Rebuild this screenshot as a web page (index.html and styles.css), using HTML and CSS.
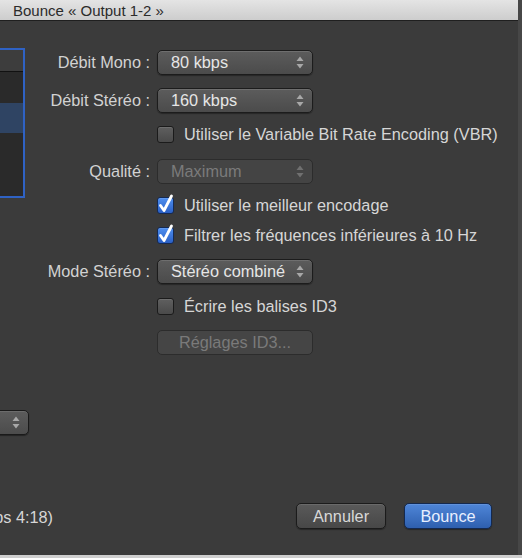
FILE: index.html
```html
<!DOCTYPE html>
<html lang="fr">
<head>
<meta charset="utf-8">
<title>Bounce</title>
<link rel="stylesheet" href="styles.css">
</head>
<body>
<div class="window">
  <div class="titlebar"><span class="title">Bounce « Output 1-2 »</span></div>
  <div class="main">
    <div class="side">
      <div class="list">
        <div class="list-head"></div>
        <div class="list-row"></div>
        <div class="list-row sel"></div>
        <div class="list-row fill"></div>
      </div>
      <div class="side-popup">
        <svg class="arrows" width="8" height="13" viewBox="0 0 8 13"><path d="M4 0.5 L7.5 5 L0.5 5 Z M0.5 8 L7.5 8 L4 12.5 Z"/></svg>
      </div>
    </div>
    <div class="form">
      <div class="row">
        <span class="lbl">Débit Mono :</span>
        <div class="popup"><span class="val">80 kbps</span><svg class="arrows" width="8" height="13" viewBox="0 0 8 13"><path d="M4 0.5 L7.5 5 L0.5 5 Z M0.5 8 L7.5 8 L4 12.5 Z"/></svg></div>
      </div>
      <div class="row">
        <span class="lbl">Débit Stéréo :</span>
        <div class="popup"><span class="val">160 kbps</span><svg class="arrows" width="8" height="13" viewBox="0 0 8 13"><path d="M4 0.5 L7.5 5 L0.5 5 Z M0.5 8 L7.5 8 L4 12.5 Z"/></svg></div>
      </div>
      <div class="row check-row before-popup">
        <span class="lbl"></span>
        <label class="check"><span class="box"></span><span class="ctext">Utiliser le Variable Bit Rate Encoding (VBR)</span></label>
      </div>
      <div class="row">
        <span class="lbl">Qualité :</span>
        <div class="popup disabled"><span class="val">Maximum</span><svg class="arrows" width="8" height="13" viewBox="0 0 8 13"><path d="M4 0.5 L7.5 5 L0.5 5 Z M0.5 8 L7.5 8 L4 12.5 Z"/></svg></div>
      </div>
      <div class="row check-row">
        <span class="lbl"></span>
        <label class="check"><span class="box on"><svg class="tick" width="17" height="17" viewBox="0 0 17 17"><path d="M3.5 8.5 L7 13.5 L14.5 -1"/></svg></span><span class="ctext">Utiliser le meilleur encodage</span></label>
      </div>
      <div class="row check-row before-popup">
        <span class="lbl"></span>
        <label class="check"><span class="box on"><svg class="tick" width="17" height="17" viewBox="0 0 17 17"><path d="M3.5 8.5 L7 13.5 L14.5 -1"/></svg></span><span class="ctext">Filtrer les fréquences inférieures à 10 Hz</span></label>
      </div>
      <div class="row">
        <span class="lbl">Mode Stéréo :</span>
        <div class="popup"><span class="val">Stéréo combiné</span><svg class="arrows" width="8" height="13" viewBox="0 0 8 13"><path d="M4 0.5 L7.5 5 L0.5 5 Z M0.5 8 L7.5 8 L4 12.5 Z"/></svg></div>
      </div>
      <div class="row check-row before-popup">
        <span class="lbl"></span>
        <label class="check"><span class="box"></span><span class="ctext">Écrire les balises ID3</span></label>
      </div>
      <div class="row">
        <span class="lbl"></span>
        <div class="pushbtn disabled">Réglages ID3...</div>
      </div>
    </div>
  </div>
  <div class="footer">
    <div class="status"><span>durée temps 4:18)</span></div>
    <div class="buttons">
      <button class="btn">Annuler</button>
      <button class="btn primary">Bounce</button>
    </div>
  </div>
</div>
</body>
</html>
```

FILE: styles.css
```css
html, body {
  margin: 0;
  padding: 0;
}
body {
  width: 522px;
  height: 558px;
  background: #cfcfcf;
  font-family: "Liberation Sans", Arial, sans-serif;
  overflow: hidden;
}
.window {
  width: 518px;
  height: 555px;
  background: #3b3b3b;
  border-right: 4px solid #474747;
  display: flex;
  flex-direction: column;
  overflow: hidden;
}
.titlebar {
  height: 20px;
  flex: none;
  background: linear-gradient(#e4e4e4, #cdcdcd);
  border-bottom: 1px solid #1f1f1f;
  display: flex;
  align-items: center;
  padding-left: 13px;
}
.title {
  font-size: 15px;
  color: #2b2b2b;
}
.main {
  height: 470px;
  flex: none;
  display: flex;
}
.side {
  width: 30px;
  flex: none;
  display: flex;
  flex-direction: column;
}
.list {
  margin-top: 27px;
  width: 23px;
  height: 146px;
  border: 2px solid #2f62c4;
  border-left: none;
  background: #2a2a2a;
  display: flex;
  flex-direction: column;
}
.list-head {
  height: 21px;
  background: #3d3d3d;
  border-bottom: 1px solid #111;
}
.list-row {
  height: 31px;
}
.list-row.sel {
  height: 30px;
  background: #2f4463;
}
.list-row.fill {
  flex: 1;
}
.side-popup {
  margin-top: 212px;
  height: 25px;
  margin-left: -6px;
  box-sizing: border-box;
  width: 35px;
  border: 1px solid #1a1a1a;
  border-radius: 5px;
  background: linear-gradient(#5c5c5c, #4c4c4c);
  box-shadow: inset 0 1px 0 rgba(255,255,255,0.1), 0 1px 1px rgba(0,0,0,0.4);
  display: flex;
  align-items: center;
  justify-content: flex-end;
  padding-right: 8px;
}
.arrows {
  fill: #a8a8a8;
  flex: none;
}
.form {
  padding-top: 29px;
  display: flex;
  flex-direction: column;
  gap: 12.5px;
}
.row {
  display: grid;
  grid-template-columns: 120px auto;
  column-gap: 7px;
  align-items: center;
}
.row.before-popup {
  margin-bottom: 4px;
}
.lbl {
  text-align: right;
  font-size: 16.3px;
  color: #d2d2d2;
  white-space: nowrap;
}
.popup {
  width: 156px;
  height: 25px;
  box-sizing: border-box;
  border: 1px solid #1c1c1c;
  border-radius: 5px;
  background: linear-gradient(#5c5c5c, #4b4b4b);
  box-shadow: inset 0 1px 0 rgba(255,255,255,0.12), 0 1px 1px rgba(0,0,0,0.35);
  display: flex;
  align-items: center;
  padding: 0 8px 0 13px;
}
.popup .val {
  flex: 1;
  font-size: 16.3px;
  color: #e6e6e6;
  white-space: nowrap;
}
.popup.disabled {
  background: #444;
  border-color: #2c2c2c;
  box-shadow: none;
}
.popup.disabled .val {
  color: #7b7b7b;
}
.popup.disabled .arrows {
  fill: #707070;
}
.check-row {
  height: 17px;
}
.check {
  display: flex;
  align-items: center;
  gap: 10px;
}
.box {
  width: 17px;
  height: 17px;
  box-sizing: border-box;
  border: 1px solid #1b1b1b;
  border-radius: 3px;
  background: linear-gradient(#5f5f5f, #4a4a4a);
  box-shadow: inset 0 1px 0 rgba(255,255,255,0.1);
  flex: none;
  position: relative;
}
.box.on {
  background: linear-gradient(#4f8ff0, #2a5fc4);
  border-color: #142a55;
}
.tick {
  position: absolute;
  left: -1px;
  top: -1px;
  overflow: visible;
}
.tick path {
  fill: none;
  stroke: #fff;
  stroke-width: 2.8;
  stroke-linecap: round;
  stroke-linejoin: round;
}
.ctext {
  font-size: 16.3px;
  color: #d6d6d6;
  white-space: nowrap;
}
.pushbtn {
  width: 156px;
  height: 25px;
  box-sizing: border-box;
  border-radius: 5px;
  display: flex;
  align-items: center;
  justify-content: center;
  font-size: 16.3px;
}
.pushbtn.disabled {
  background: #454545;
  border: 1px solid #2c2c2c;
  color: #7a7a7a;
}
.footer {
  flex: 1;
  display: flex;
  align-items: flex-start;
  padding-top: 12px;
}
.status {
  width: 53px;
  overflow: hidden;
  display: flex;
  justify-content: flex-end;
  padding-top: 5px;
  flex: none;
}
.status span {
  font-size: 16.3px;
  color: #d6d6d6;
  white-space: nowrap;
}
.buttons {
  margin-left: auto;
  margin-right: 26px;
  display: flex;
  gap: 18px;
}
.btn {
  height: 26px;
  box-sizing: border-box;
  border-radius: 5px;
  font-family: "Liberation Sans", Arial, sans-serif;
  font-size: 16.3px;
  padding: 0;
  border: 1px solid #1b1b1b;
  background: linear-gradient(#5a5a5a, #474747);
  color: #d8d8d8;
  box-shadow: inset 0 1px 0 rgba(255,255,255,0.1), 0 1px 1px rgba(0,0,0,0.35);
  width: 90px;
}
.btn.primary {
  width: 88px;
  background: linear-gradient(#4f86d8, #2e5fae);
  border-color: #14294f;
  color: #e8efff;
}
```
